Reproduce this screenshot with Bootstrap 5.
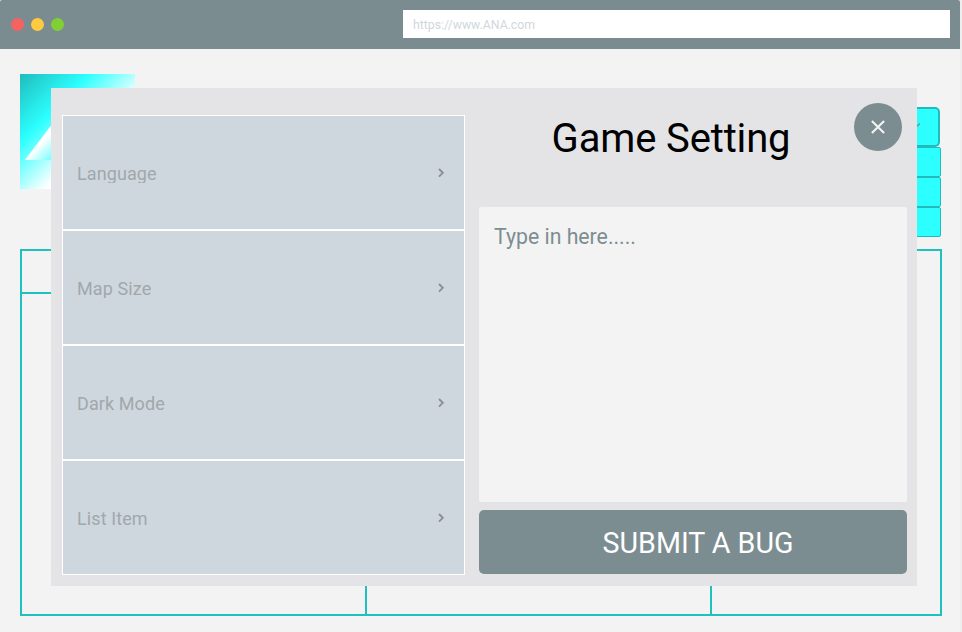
<!DOCTYPE html>
<html lang="en">
<head>
<meta charset="utf-8">
<meta name="viewport" content="width=device-width, initial-scale=1">
<title>Game Setting</title>
<link href="https://cdn.jsdelivr.net/npm/bootstrap@5.3.0/dist/css/bootstrap.min.css" rel="stylesheet">
<style>
body{font-family:Roboto,sans-serif;background:#eee;height:632px}
.app{width:960px;height:632px;background:#f3f3f3}
.topbar{height:49px;background:#7b8c91;border-radius:2px 2px 0 0;padding:0 10px 1px 11px}
.dot{width:13px;height:13px;border-radius:50%}
.dot-r{background:#f56262}.dot-y{background:#ffc940}.dot-g{background:#80d034}
.dots{gap:7px}
.url{width:547px;height:28px;border:0;border-radius:0;padding:2px 10px 0;font-size:12.25px;line-height:26px;color:#cfd8dc;background:#fff}
.url::placeholder{color:#cfd8dc}
.page-body{padding:25px 18px 16px 20px}
.page-top{height:175px;padding-right:1px}
.logo{width:115px;height:115px}
.options{width:120px;margin-top:33px}
.choice{height:40px;margin-right:1px;border:2px solid #20bcbc;border-radius:5px;background:#2cffff}
.option{height:30px;border:1px solid #20bcbc;border-radius:2px;background:#2cffff}
.board{height:367px;border:2px solid #1fc0c0}
.board-head{height:43px;width:345px;border-bottom:2px solid #1fc0c0}
.board-cell{border-right:2px solid #1fc0c0}
.board-cell-a{width:345px}
.dialog-box{left:51px;top:88px;width:866px;height:498px;background:#e4e4e6;padding:27px 10px 11px 11px}
.settings{width:403px}
.setting{height:115px;border:1px solid #fff;background:#cfd7de;padding:0 19px 0 14px;font-size:18px;line-height:20px;letter-spacing:.1px;color:#a0a8ab}
.setting span{height:20px;overflow:hidden;padding-top:1px}
.report{width:428px}
.title{height:92px;font-size:40px;line-height:48px;font-weight:400;color:#000;letter-spacing:-.15px;padding-right:44px}
.close-btn{right:15px;top:15px;width:48px;height:48px;background:#7c8d92;border:0;border-radius:50%}
.entry{height:295px;background:#f3f3f3;border:0;border-radius:2px;resize:none;padding:15px 15px 0;font-size:21.25px;line-height:30px;color:#7c8d92}
.entry::placeholder{color:#7c8d92}
.submit{height:64px;margin-top:8px;padding:1px 0 0 10px;border:0;border-radius:5px;background:#7c8d92;color:#fff;font-size:28.6px;line-height:32px}
</style>
</head>
<body class="overflow-hidden">
<div class="app position-relative">
  <header class="topbar d-flex align-items-center justify-content-between">
    <div class="dots d-flex"><span class="dot dot-r"></span><span class="dot dot-y"></span><span class="dot dot-g"></span></div>
    <input class="form-control url" type="text" placeholder="https://www.ANA.com" aria-label="Address">
  </header>
  <main class="page-body">
    <div class="page-top d-flex justify-content-between align-items-start">
      <svg class="logo" viewBox="0 0 115 115" aria-hidden="true">
        <defs>
          <linearGradient id="sky" x1="0" y1="0" x2="1" y2="1"><stop offset="0" stop-color="#20bcbc"/><stop offset=".3" stop-color="#2cffff"/><stop offset=".61" stop-color="#fff"/></linearGradient>
          <linearGradient id="peak" gradientUnits="userSpaceOnUse" x1="19" y1="71" x2="35" y2="87"><stop offset="0" stop-color="#fff"/><stop offset="1" stop-color="#5cffff"/></linearGradient>
        </defs>
        <path fill="url(#sky)" d="M0 0H115V115H0z"/>
        <path fill="url(#peak)" d="M5 86L57 17 109 86z"/>
      </svg>
      <div class="options">
        <div class="choice d-flex align-items-center justify-content-end">
          <svg width="30" height="10" viewBox="0 0 30 10" fill="none" stroke="#7c8d92" stroke-width="1.5" aria-hidden="true"><path d="M3 2L7 6 11.800 1.500"/></svg>
        </div>
        <div class="option"></div><div class="option"></div><div class="option"></div>
      </div>
    </div>
    <div class="board d-flex flex-column">
      <div class="board-head board-cell"></div>
      <div class="d-flex flex-grow-1"><div class="board-cell board-cell-a"></div><div class="board-cell board-cell-a"></div></div>
    </div>
  </main>
  <div class="dialog-box position-absolute d-flex justify-content-between" role="dialog" aria-label="Game Setting">
    <div class="settings">
      <div class="setting d-flex align-items-center justify-content-between"><span>Language</span><svg width="8" height="12" viewBox="0 0 8 12" fill="none" stroke="#8b9092" stroke-width="1.9"><path d="M2 2L5.800 5.800 2 9.600"/></svg></div>
      <div class="setting d-flex align-items-center justify-content-between"><span>Map Size</span><svg width="8" height="12" viewBox="0 0 8 12" fill="none" stroke="#8b9092" stroke-width="1.9"><path d="M2 2L5.800 5.800 2 9.600"/></svg></div>
      <div class="setting d-flex align-items-center justify-content-between"><span>Dark Mode</span><svg width="8" height="12" viewBox="0 0 8 12" fill="none" stroke="#8b9092" stroke-width="1.9"><path d="M2 2L5.800 5.800 2 9.600"/></svg></div>
      <div class="setting d-flex align-items-center justify-content-between"><span>List Item</span><svg width="8" height="12" viewBox="0 0 8 12" fill="none" stroke="#8b9092" stroke-width="1.9"><path d="M2 2L5.800 5.800 2 9.600"/></svg></div>
    </div>
    <div class="report d-flex flex-column">
      <h1 class="title text-center mb-0">Game Setting</h1>
      <textarea class="form-control entry" placeholder="Type in here....." aria-label="Bug report"></textarea>
      <button class="btn submit w-100" type="button">SUBMIT A BUG</button>
    </div>
    <button class="close-btn position-absolute d-flex align-items-center justify-content-center p-0" type="button" aria-label="Close">
      <svg width="16" height="16" viewBox="0 0 16 16" fill="none" stroke="#f3f3f3" stroke-width="2.100" aria-hidden="true"><path d="M1.900 1.900L14.100 14.100M14.100 1.900L1.900 14.100"/></svg>
    </button>
  </div>
</div>
<script src="https://cdn.jsdelivr.net/npm/bootstrap@5.3.0/dist/js/bootstrap.bundle.min.js"></script>
</body>
</html>
